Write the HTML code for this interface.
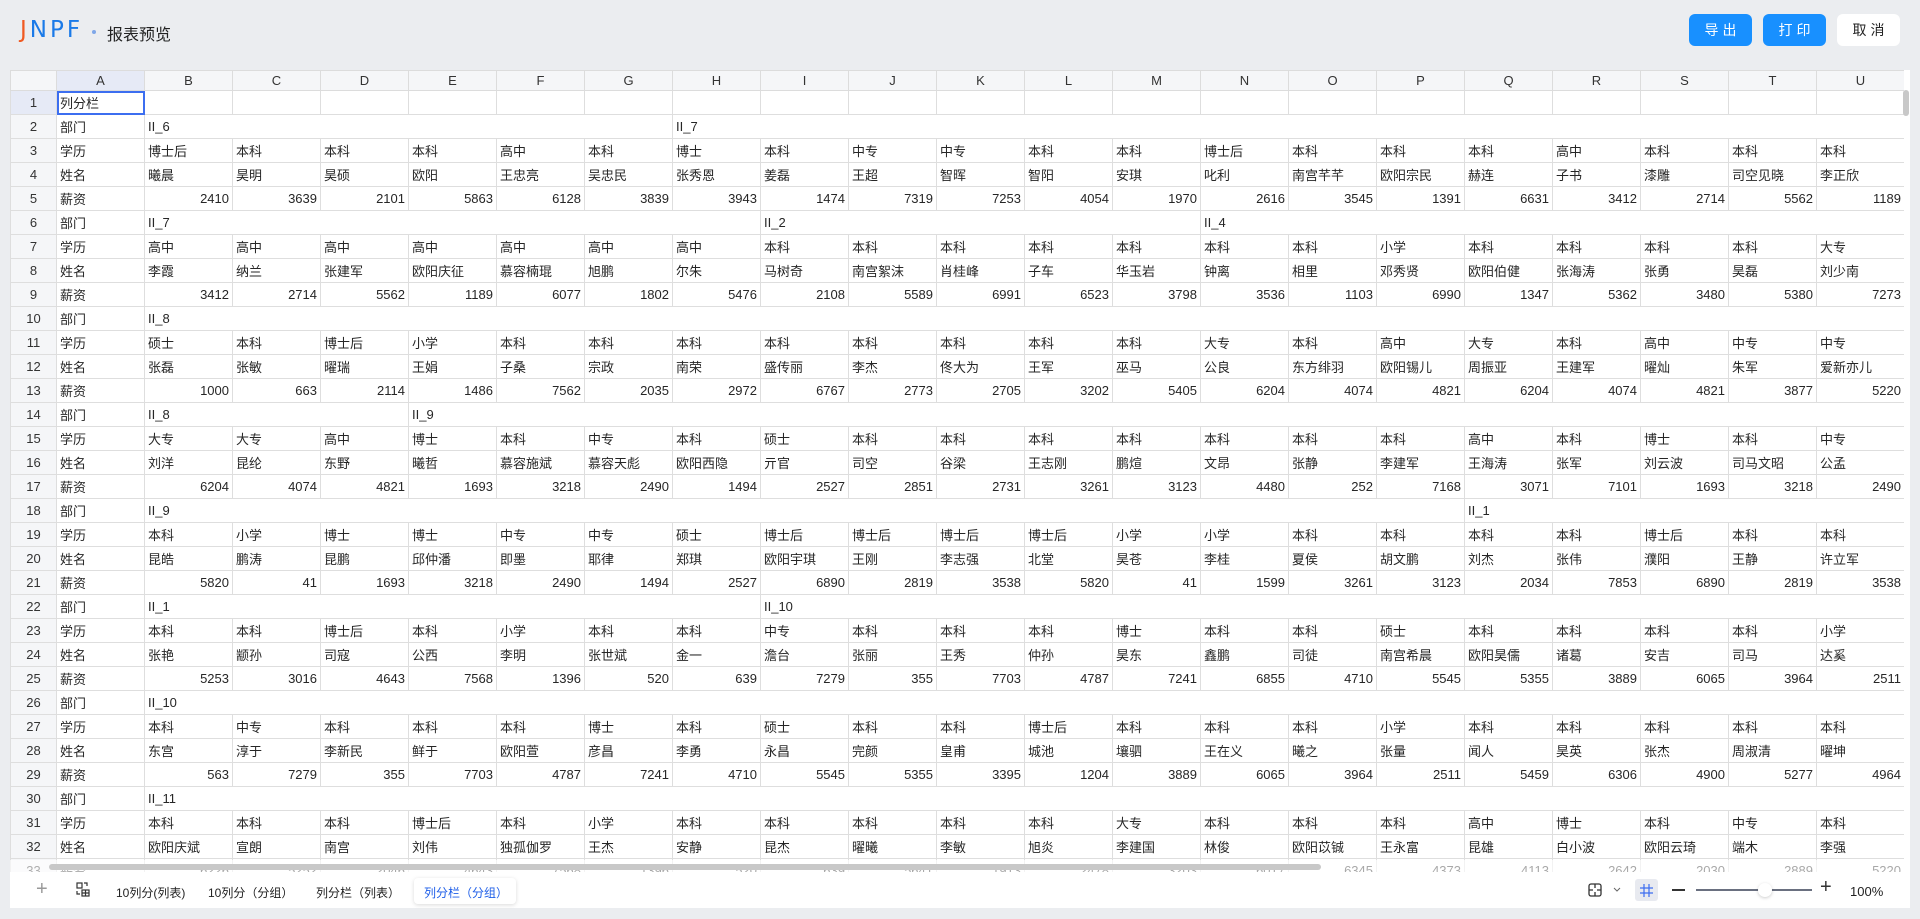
<!DOCTYPE html>
<html><head><meta charset="utf-8"><style>
*{margin:0;padding:0;box-sizing:border-box}
body{width:1920px;height:919px;background:#ebedf0;font-family:"Liberation Sans","Noto Sans CJK SC",sans-serif;position:relative;overflow:hidden;color:#262626}
.logo{position:absolute;left:20px;top:17px;font-size:23px;letter-spacing:3px;color:#1a7ae8;font-family:"DejaVu Sans","Liberation Sans",sans-serif}
.logo b{color:#f05a22;font-weight:normal}
.dot{position:absolute;left:92px;top:30px;width:4px;height:4px;border-radius:50%;background:#7fa7e8}
.title{position:absolute;left:107px;top:21px;font-size:16px;color:#222}
.btn{position:absolute;top:14px;width:63px;height:32px;border-radius:6px;font-size:14px;line-height:32px;text-align:center;letter-spacing:4px;text-indent:4px}
.blue{background:#1890ff;color:#fff}
.white{background:#fff;color:#222}
.sheet{position:absolute;left:10px;top:70px;width:1900px;height:802px;background:#fff;overflow:hidden}
table{border-collapse:collapse;table-layout:fixed;font-size:13px;position:absolute;left:0;top:0;width:1982px}
td{height:24px;border:1px solid #dedede;padding:0 3px;white-space:nowrap;overflow:hidden;color:#262626}
tr.h td{height:20px;background:#f5f6f8;text-align:center;color:#333;border-color:#dcdcdc}
td.n{text-align:center;background:#f5f6f8;color:#333}
td.r{text-align:right}
.sel{outline:2px solid #3c6ef0;outline-offset:-2px;position:relative}
.vs{position:absolute;left:1893px;top:20px;width:6px;height:26px;background:#c8c8c8;border-radius:3px}
.rs{position:absolute;left:1894px;top:0;width:6px;height:802px;background:#fff}
.hs{position:absolute;left:39px;top:794px;width:1272px;height:6px;background:#c8c8c8;border-radius:3px}
.fade{position:absolute;left:0;top:790px;width:1900px;height:12px;background:rgba(255,255,255,.6)}
.bar{position:absolute;left:10px;top:872px;width:1900px;height:36px;background:#fff;font-size:12px;color:#222}
.bar span{position:absolute;top:12px}
.act{position:absolute;left:404px;top:6px;width:102px;height:26px;border-radius:4px;box-shadow:0 1px 4px rgba(0,0,0,.15)}
</style></head><body>
<div class="logo"><b>J</b>NPF</div><div class="dot"></div>
<div class="title">报表预览</div>
<div class="btn blue" style="left:1689px">导出</div>
<div class="btn blue" style="left:1763px">打印</div>
<div class="btn white" style="left:1837px">取消</div>
<div class="sheet">
<table>
<colgroup><col style="width:46px"><col style="width:88px"><col style="width:88px"><col style="width:88px"><col style="width:88px"><col style="width:88px"><col style="width:88px"><col style="width:88px"><col style="width:88px"><col style="width:88px"><col style="width:88px"><col style="width:88px"><col style="width:88px"><col style="width:88px"><col style="width:88px"><col style="width:88px"><col style="width:88px"><col style="width:88px"><col style="width:88px"><col style="width:88px"><col style="width:88px"><col style="width:88px"><col style="width:88px"></colgroup>
<tr class="h"><td></td><td style="background:#e6eaf6">A</td><td>B</td><td>C</td><td>D</td><td>E</td><td>F</td><td>G</td><td>H</td><td>I</td><td>J</td><td>K</td><td>L</td><td>M</td><td>N</td><td>O</td><td>P</td><td>Q</td><td>R</td><td>S</td><td>T</td><td>U</td><td></td></tr>
<tr><td class="n" style="background:#e6eaf6">1</td><td class="sel">列分栏</td><td></td><td></td><td></td><td></td><td></td><td></td><td></td><td></td><td></td><td></td><td></td><td></td><td></td><td></td><td></td><td></td><td></td><td></td><td></td><td></td><td></td></tr>
<tr><td class="n">2</td><td>部门</td><td colspan="6">II_6</td><td colspan="15">II_7</td></tr>
<tr><td class="n">3</td><td>学历</td><td>博士后</td><td>本科</td><td>本科</td><td>本科</td><td>高中</td><td>本科</td><td>博士</td><td>本科</td><td>中专</td><td>中专</td><td>本科</td><td>本科</td><td>博士后</td><td>本科</td><td>本科</td><td>本科</td><td>高中</td><td>本科</td><td>本科</td><td>本科</td><td>本</td></tr>
<tr><td class="n">4</td><td>姓名</td><td>曦晨</td><td>昊明</td><td>昊硕</td><td>欧阳</td><td>王忠亮</td><td>吴忠民</td><td>张秀恩</td><td>姜磊</td><td>王超</td><td>智晖</td><td>智阳</td><td>安琪</td><td>叱利</td><td>南宫芊芊</td><td>欧阳宗民</td><td>赫连</td><td>子书</td><td>漆雕</td><td>司空见晓</td><td>李正欣</td><td>曲</td></tr>
<tr><td class="n">5</td><td>薪资</td><td class="r">2410</td><td class="r">3639</td><td class="r">2101</td><td class="r">5863</td><td class="r">6128</td><td class="r">3839</td><td class="r">3943</td><td class="r">1474</td><td class="r">7319</td><td class="r">7253</td><td class="r">4054</td><td class="r">1970</td><td class="r">2616</td><td class="r">3545</td><td class="r">1391</td><td class="r">6631</td><td class="r">3412</td><td class="r">2714</td><td class="r">5562</td><td class="r">1189</td><td></td></tr>
<tr><td class="n">6</td><td>部门</td><td colspan="7">II_7</td><td colspan="5">II_2</td><td colspan="9">II_4</td></tr>
<tr><td class="n">7</td><td>学历</td><td>高中</td><td>高中</td><td>高中</td><td>高中</td><td>高中</td><td>高中</td><td>高中</td><td>本科</td><td>本科</td><td>本科</td><td>本科</td><td>本科</td><td>本科</td><td>本科</td><td>小学</td><td>本科</td><td>本科</td><td>本科</td><td>本科</td><td>大专</td><td></td></tr>
<tr><td class="n">8</td><td>姓名</td><td>李霞</td><td>纳兰</td><td>张建军</td><td>欧阳庆征</td><td>慕容楠琨</td><td>旭鹏</td><td>尔朱</td><td>马树奇</td><td>南宫絮沫</td><td>肖桂峰</td><td>子车</td><td>华玉岩</td><td>钟离</td><td>相里</td><td>邓秀贤</td><td>欧阳伯健</td><td>张海涛</td><td>张勇</td><td>昊磊</td><td>刘少南</td><td></td></tr>
<tr><td class="n">9</td><td>薪资</td><td class="r">3412</td><td class="r">2714</td><td class="r">5562</td><td class="r">1189</td><td class="r">6077</td><td class="r">1802</td><td class="r">5476</td><td class="r">2108</td><td class="r">5589</td><td class="r">6991</td><td class="r">6523</td><td class="r">3798</td><td class="r">3536</td><td class="r">1103</td><td class="r">6990</td><td class="r">1347</td><td class="r">5362</td><td class="r">3480</td><td class="r">5380</td><td class="r">7273</td><td></td></tr>
<tr><td class="n">10</td><td>部门</td><td colspan="21">II_8</td></tr>
<tr><td class="n">11</td><td>学历</td><td>硕士</td><td>本科</td><td>博士后</td><td>小学</td><td>本科</td><td>本科</td><td>本科</td><td>本科</td><td>本科</td><td>本科</td><td>本科</td><td>本科</td><td>大专</td><td>本科</td><td>高中</td><td>大专</td><td>本科</td><td>高中</td><td>中专</td><td>中专</td><td></td></tr>
<tr><td class="n">12</td><td>姓名</td><td>张磊</td><td>张敏</td><td>曜瑞</td><td>王娟</td><td>子桑</td><td>宗政</td><td>南荣</td><td>盛传丽</td><td>李杰</td><td>佟大为</td><td>王军</td><td>巫马</td><td>公良</td><td>东方绯羽</td><td>欧阳锡儿</td><td>周振亚</td><td>王建军</td><td>曜灿</td><td>朱军</td><td>爱新亦儿</td><td></td></tr>
<tr><td class="n">13</td><td>薪资</td><td class="r">1000</td><td class="r">663</td><td class="r">2114</td><td class="r">1486</td><td class="r">7562</td><td class="r">2035</td><td class="r">2972</td><td class="r">6767</td><td class="r">2773</td><td class="r">2705</td><td class="r">3202</td><td class="r">5405</td><td class="r">6204</td><td class="r">4074</td><td class="r">4821</td><td class="r">6204</td><td class="r">4074</td><td class="r">4821</td><td class="r">3877</td><td class="r">5220</td><td></td></tr>
<tr><td class="n">14</td><td>部门</td><td colspan="3">II_8</td><td colspan="18">II_9</td></tr>
<tr><td class="n">15</td><td>学历</td><td>大专</td><td>大专</td><td>高中</td><td>博士</td><td>本科</td><td>中专</td><td>本科</td><td>硕士</td><td>本科</td><td>本科</td><td>本科</td><td>本科</td><td>本科</td><td>本科</td><td>本科</td><td>高中</td><td>本科</td><td>博士</td><td>本科</td><td>中专</td><td></td></tr>
<tr><td class="n">16</td><td>姓名</td><td>刘洋</td><td>昆纶</td><td>东野</td><td>曦哲</td><td>慕容施斌</td><td>慕容天彪</td><td>欧阳西隐</td><td>亓官</td><td>司空</td><td>谷梁</td><td>王志刚</td><td>鹏煊</td><td>文昂</td><td>张静</td><td>李建军</td><td>王海涛</td><td>张军</td><td>刘云波</td><td>司马文昭</td><td>公孟</td><td></td></tr>
<tr><td class="n">17</td><td>薪资</td><td class="r">6204</td><td class="r">4074</td><td class="r">4821</td><td class="r">1693</td><td class="r">3218</td><td class="r">2490</td><td class="r">1494</td><td class="r">2527</td><td class="r">2851</td><td class="r">2731</td><td class="r">3261</td><td class="r">3123</td><td class="r">4480</td><td class="r">252</td><td class="r">7168</td><td class="r">3071</td><td class="r">7101</td><td class="r">1693</td><td class="r">3218</td><td class="r">2490</td><td></td></tr>
<tr><td class="n">18</td><td>部门</td><td colspan="15">II_9</td><td colspan="6">II_1</td></tr>
<tr><td class="n">19</td><td>学历</td><td>本科</td><td>小学</td><td>博士</td><td>博士</td><td>中专</td><td>中专</td><td>硕士</td><td>博士后</td><td>博士后</td><td>博士后</td><td>博士后</td><td>小学</td><td>小学</td><td>本科</td><td>本科</td><td>本科</td><td>本科</td><td>博士后</td><td>本科</td><td>本科</td><td></td></tr>
<tr><td class="n">20</td><td>姓名</td><td>昆皓</td><td>鹏涛</td><td>昆鹏</td><td>邱仲潘</td><td>即墨</td><td>耶律</td><td>郑琪</td><td>欧阳宇琪</td><td>王刚</td><td>李志强</td><td>北堂</td><td>昊苍</td><td>李桂</td><td>夏侯</td><td>胡文鹏</td><td>刘杰</td><td>张伟</td><td>濮阳</td><td>王静</td><td>许立军</td><td></td></tr>
<tr><td class="n">21</td><td>薪资</td><td class="r">5820</td><td class="r">41</td><td class="r">1693</td><td class="r">3218</td><td class="r">2490</td><td class="r">1494</td><td class="r">2527</td><td class="r">6890</td><td class="r">2819</td><td class="r">3538</td><td class="r">5820</td><td class="r">41</td><td class="r">1599</td><td class="r">3261</td><td class="r">3123</td><td class="r">2034</td><td class="r">7853</td><td class="r">6890</td><td class="r">2819</td><td class="r">3538</td><td></td></tr>
<tr><td class="n">22</td><td>部门</td><td colspan="7">II_1</td><td colspan="14">II_10</td></tr>
<tr><td class="n">23</td><td>学历</td><td>本科</td><td>本科</td><td>博士后</td><td>本科</td><td>小学</td><td>本科</td><td>本科</td><td>中专</td><td>本科</td><td>本科</td><td>本科</td><td>博士</td><td>本科</td><td>本科</td><td>硕士</td><td>本科</td><td>本科</td><td>本科</td><td>本科</td><td>小学</td><td></td></tr>
<tr><td class="n">24</td><td>姓名</td><td>张艳</td><td>颛孙</td><td>司寇</td><td>公西</td><td>李明</td><td>张世斌</td><td>金一</td><td>澹台</td><td>张丽</td><td>王秀</td><td>仲孙</td><td>昊东</td><td>鑫鹏</td><td>司徒</td><td>南宫希晨</td><td>欧阳昊儒</td><td>诸葛</td><td>安吉</td><td>司马</td><td>达奚</td><td></td></tr>
<tr><td class="n">25</td><td>薪资</td><td class="r">5253</td><td class="r">3016</td><td class="r">4643</td><td class="r">7568</td><td class="r">1396</td><td class="r">520</td><td class="r">639</td><td class="r">7279</td><td class="r">355</td><td class="r">7703</td><td class="r">4787</td><td class="r">7241</td><td class="r">6855</td><td class="r">4710</td><td class="r">5545</td><td class="r">5355</td><td class="r">3889</td><td class="r">6065</td><td class="r">3964</td><td class="r">2511</td><td></td></tr>
<tr><td class="n">26</td><td>部门</td><td colspan="21">II_10</td></tr>
<tr><td class="n">27</td><td>学历</td><td>本科</td><td>中专</td><td>本科</td><td>本科</td><td>本科</td><td>博士</td><td>本科</td><td>硕士</td><td>本科</td><td>本科</td><td>博士后</td><td>本科</td><td>本科</td><td>本科</td><td>小学</td><td>本科</td><td>本科</td><td>本科</td><td>本科</td><td>本科</td><td></td></tr>
<tr><td class="n">28</td><td>姓名</td><td>东宫</td><td>淳于</td><td>李新民</td><td>鲜于</td><td>欧阳萱</td><td>彦昌</td><td>李勇</td><td>永昌</td><td>完颜</td><td>皇甫</td><td>城池</td><td>壤驷</td><td>王在义</td><td>曦之</td><td>张量</td><td>闻人</td><td>昊英</td><td>张杰</td><td>周淑清</td><td>曜坤</td><td></td></tr>
<tr><td class="n">29</td><td>薪资</td><td class="r">563</td><td class="r">7279</td><td class="r">355</td><td class="r">7703</td><td class="r">4787</td><td class="r">7241</td><td class="r">4710</td><td class="r">5545</td><td class="r">5355</td><td class="r">3395</td><td class="r">1204</td><td class="r">3889</td><td class="r">6065</td><td class="r">3964</td><td class="r">2511</td><td class="r">5459</td><td class="r">6306</td><td class="r">4900</td><td class="r">5277</td><td class="r">4964</td><td></td></tr>
<tr><td class="n">30</td><td>部门</td><td colspan="21">II_11</td></tr>
<tr><td class="n">31</td><td>学历</td><td>本科</td><td>本科</td><td>本科</td><td>博士后</td><td>本科</td><td>小学</td><td>本科</td><td>本科</td><td>本科</td><td>本科</td><td>本科</td><td>大专</td><td>本科</td><td>本科</td><td>本科</td><td>高中</td><td>博士</td><td>本科</td><td>中专</td><td>本科</td><td></td></tr>
<tr><td class="n">32</td><td>姓名</td><td>欧阳庆斌</td><td>宣朗</td><td>南宫</td><td>刘伟</td><td>独孤伽罗</td><td>王杰</td><td>安静</td><td>昆杰</td><td>曜曦</td><td>李敏</td><td>旭炎</td><td>李建国</td><td>林俊</td><td>欧阳苡铖</td><td>王永富</td><td>昆雄</td><td>白小波</td><td>欧阳云琦</td><td>端木</td><td>李强</td><td></td></tr>
<tr><td class="n">33</td><td>薪资</td><td class="r">6226</td><td class="r">5252</td><td class="r">2046</td><td class="r">4643</td><td class="r">7568</td><td class="r">1396</td><td class="r">520</td><td class="r">639</td><td class="r">5641</td><td class="r">1913</td><td class="r">2478</td><td class="r">3203</td><td class="r">6017</td><td class="r">6345</td><td class="r">4373</td><td class="r">4113</td><td class="r">2642</td><td class="r">2030</td><td class="r">2889</td><td class="r">5220</td><td></td></tr>
</table>
<div class="fade"></div>
<div class="rs"></div>
<div class="vs"></div>
<div class="hs"></div>
</div>
<div class="bar">
<span style="left:26px;top:6px;font-size:20px;color:#999">+</span>
<svg style="position:absolute;left:66px;top:10px" width="14" height="15" viewBox="0 0 14 15" fill="none" stroke="#333" stroke-width="1.2"><rect x="1" y="1" width="5" height="5"/><path d="M8 1h3v3M1 9v3h3"/><rect x="6" y="8" width="7" height="6"/><path d="M9.5 8v6M6 11h7"/></svg>
<span style="left:106px">10列分(列表)</span>
<span style="left:198px">10列分（分组）</span>
<span style="left:306px">列分栏（列表）</span>
<div class="act"></div>
<span style="left:414px;color:#1e5ee8">列分栏（分组）</span>
<svg style="position:absolute;left:1578px;top:11px" width="14" height="14" viewBox="0 0 14 14" fill="none" stroke="#333" stroke-width="1.3"><rect x="1" y="1" width="12" height="12" rx="2"/><path d="M7 1v4M7 9v4M1 7h4M9 7h4"/></svg>
<svg style="position:absolute;left:1603px;top:15px" width="8" height="6" viewBox="0 0 8 6" fill="none" stroke="#666"><path d="M1 1l3 3 3-3"/></svg>
<div style="position:absolute;left:1625px;top:7px;width:23px;height:22px;background:#e8eaf0;border-radius:3px"></div>
<svg style="position:absolute;left:1630px;top:12px" width="13" height="13" viewBox="0 0 13 13" fill="none" stroke="#3d6df0" stroke-width="1.2"><path d="M4 0v13M9 0v13M0 4h13M0 9h13"/></svg>
<div style="position:absolute;left:1662px;top:17px;width:13px;height:2px;background:#333"></div>
<div style="position:absolute;left:1686px;top:17px;width:116px;height:2px;background:#6a7080"></div>
<div style="position:absolute;left:1748px;top:11px;width:14px;height:14px;border-radius:50%;background:#fff;box-shadow:0 1px 3px rgba(0,0,0,.2)"></div>
<span style="left:1810px;top:4px;font-size:20px;color:#333">+</span>
<span style="left:1840px;font-size:13px">100%</span>
</div>
</body></html>
